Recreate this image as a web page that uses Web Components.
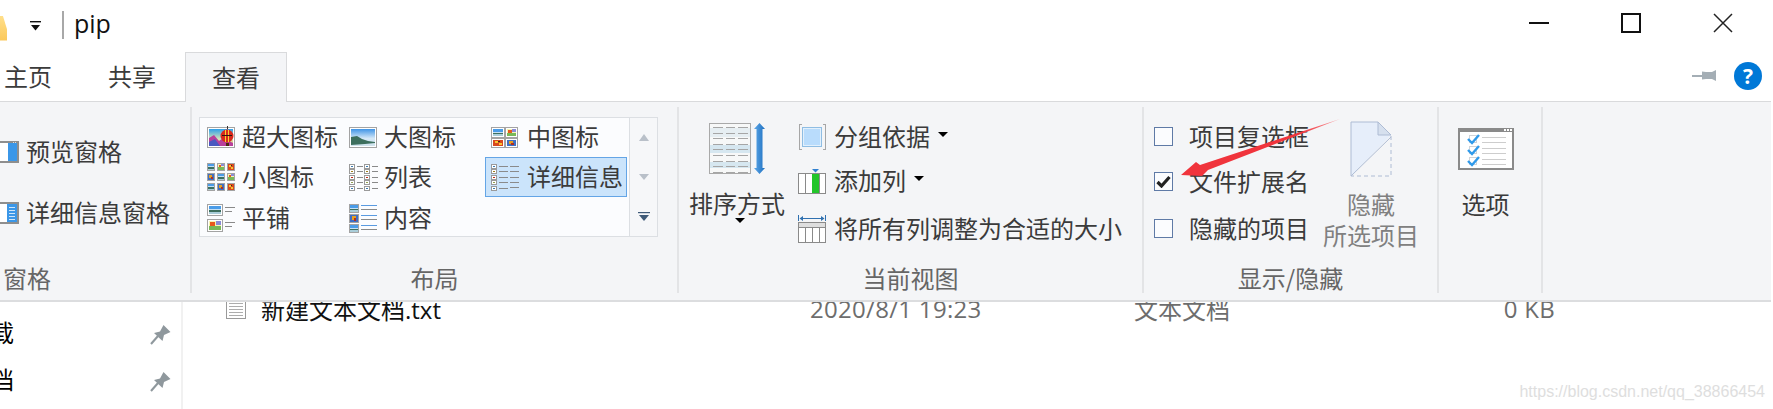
<!DOCTYPE html>
<html lang="zh-CN">
<head>
<meta charset="utf-8">
<title>pip</title>
<style>
  html, body { margin: 0; padding: 0; background: #fff; }
  body {
    position: relative; width: 1773px; height: 409px; overflow: hidden;
    font: 24px/30px "Noto Sans CJK SC", "Open Sans", sans-serif; color: #3b3b3b;
  }
</style>
</head>
<body>
<explorer-title title-text="pip"></explorer-title>
<ribbon-tabs></ribbon-tabs>
<ribbon-panel>
  <ribbon-group label="窗格" style="width:192px;--label-align:left;--label-pad:3px">
    <pane-buttons></pane-buttons>
  </ribbon-group>
  <ribbon-group label="布局" style="width:487px">
    <view-gallery>
      <gallery-item icon="xl">超大图标</gallery-item>
      <gallery-item icon="big">大图标</gallery-item>
      <gallery-item icon="medium" col3>中图标</gallery-item>
      <gallery-item icon="small">小图标</gallery-item>
      <gallery-item icon="list">列表</gallery-item>
      <gallery-item icon="details" col3 selected>详细信息</gallery-item>
      <gallery-item icon="tiles" low>平铺</gallery-item>
      <gallery-item icon="content" low>内容</gallery-item>
    </view-gallery>
  </ribbon-group>
  <ribbon-group label="当前视图" style="width:465px">
    <current-view></current-view>
  </ribbon-group>
  <ribbon-group label="显示/隐藏" style="width:295px">
    <show-hide></show-hide>
  </ribbon-group>
  <ribbon-group label="" style="width:104px">
    <big-button icon="options" top="21" text-top="18" style="margin-right:9px">选项</big-button>
  </ribbon-group>
</ribbon-panel>
<file-area></file-area>
<red-arrow></red-arrow>
<water-mark>https://blog.csdn.net/qq_38866454</water-mark>

<script>
(function() {
  const r = (x, y, w, h, f) => `<rect x="${x}" y="${y}" width="${w}" height="${h}" fill="${f}"/>`;
  const scenes = {
    lake: [[0,0,1,.42,'#4a9ce8'],[0,.38,1,.2,'#c5e0f5'],[0,.55,1,.25,'#3d6f5e'],[0,.78,1,.22,'#a9cdd9']],
    flower: [[0,0,1,1,'#f8f4b0'],[.55,0,.45,.4,'#8a8ad8'],[0,.55,1,.45,'#78b858'],[.1,.1,.4,.45,'#e8581c']],
    red: [[0,0,1,1,'#d8481e'],[.15,.15,.3,.3,'#f7c531'],[.55,.5,.3,.35,'#f7c531'],[.5,.15,.2,.2,'#3a2a1a']],
    night: [[0,0,1,1,'#3f6fc4'],[.2,.2,.5,.5,'#e8a020'],[.45,.45,.35,.4,'#b03020']]
  };
  // small framed picture, scene rects are given as fractions of the inside
  const pic = (x, y, w, h, s) => {
    const inset = w < 12 ? 1 : 2;
    let out = r(x, y, w, h, '#a3a3a3') + r(x + 1, y + 1, w - 2, h - 2, '#fff');
    const iw = w - inset * 2, ih = h - inset * 2;
    for (const p of scenes[s]) out += r(x + inset + p[0] * iw, y + inset + p[1] * ih, p[2] * iw, p[3] * ih, p[4]);
    return out;
  };
  const tiny = (x, y, c) => r(x, y, 6, 5, '#9a9a9a') + r(x + 1, y + 1, 4, 3, '#fff') + r(x + 2, y + 2, 2, 1, c);
  const tinyColors = ['#3a7ab0', '#a08020', '#c02a1a', '#90a050', '#3a7ab0'];
  const listCol = (x, lineW) => tinyColors.map((c, i) => tiny(x, 1 + Math.round(i * 5.4), c) + r(x + 8, 3 + Math.round(i * 5.4), lineW, 1, '#8a8a8a')).join('');

  const sortRows = () => {
    let out = r(0, 0, 42, 51, '#a9a9a9') + r(1, 1, 40, 49, '#f7f8f8');
    out += r(1, 5, 40, 9, '#e6eef2') + r(1, 22, 40, 8, '#d6e7f0') + r(1, 39, 40, 6, '#d6e7f0');
    for (let y = 4; y < 49; y += 5.6) {
      out += r(4, Math.round(y), 10, 1, '#a6a6a6') + r(17, Math.round(y), 9, 1, '#a6a6a6') + r(29, Math.round(y), 10, 1, '#a6a6a6');
    }
    return out;
  };

  const checkRow = (y) => r(11, y, 8, 8, '#cfd3d8') + r(12, y + 1, 6, 6, '#fff') +
    `<path d="M10 ${y + 4} l4 4 l7 -8" fill="none" stroke="#2f9aea" stroke-width="2.4" shape-rendering="auto"/>` +
    r(24, y + 2, 24, 1, '#cdcdcd') + r(24, y + 7, 24, 1, '#cdcdcd');

  const ICONS = {
    xl: [28, 28, `<defs><linearGradient id="s" x1="0" y1="0" x2="0" y2="1"><stop offset="0" stop-color="#2f9fe8"/><stop offset=".6" stop-color="#d8e6b8"/><stop offset="1" stop-color="#e8b060"/></linearGradient></defs>
      ${r(0,3,28,21,'#a3a3a3')}${r(1,4,26,19,'#fff')}<rect x="2" y="5" width="24" height="17" fill="url(#s)"/>
      <path d="M2 14 L7 11 L12 17 L16 14 L26 19 V22 H2Z" fill="#b8409c" shape-rendering="auto"/>
      <path d="M2 18 L8 15 L13 22 H2Z" fill="#4a58c0" shape-rendering="auto"/>
      <circle cx="20" cy="12" r="6.5" fill="#d8281c" shape-rendering="auto"/>${r(18,6,1,12,'#f7d030')}${r(21,6,1,12,'#f7d030')}${r(15,11,10,1,'#2a1a10')}${r(19,19,3,3,'#4a2a10')}${r(20,2,1,3,'#333')}`],
    big: [28, 28, `<defs><linearGradient id="k" x1="0" y1="0" x2="0" y2="1"><stop offset="0" stop-color="#3f94e6"/><stop offset=".55" stop-color="#d4e8f8"/><stop offset="1" stop-color="#cfe2ec"/></linearGradient></defs>
      ${r(0,3,28,21,'#a3a3a3')}${r(1,4,26,19,'#fff')}<rect x="2" y="5" width="24" height="17" fill="url(#k)"/>
      <path d="M2 13 L8 12 L13 15 L19 17 L26 18 V19 L16 20 L2 21Z" fill="#3d6f5e" shape-rendering="auto"/>`],
    medium: [28, 28, pic(0, 3, 14, 11, 'lake') + pic(14, 3, 13, 11, 'flower') + pic(0, 14, 14, 10, 'red') + pic(14, 14, 13, 10, 'night')],
    small: [28, 28, [['lake','flower','red'],['night','lake','flower'],['lake','night','red']].map((row, j) =>
      row.map((s, i) => pic(i * 10, j * 10, 8, 8, s)).join('')).join('')],
    list: [28, 28, listCol(0, 6) + listCol(15, 6)],
    details: [28, 28, listCol(0, 9) + [3, 8, 14, 19, 24].map(y => r(19, y, 9, 1, '#8a8a8a')).join('')],
    tiles: [28, 28, pic(0, 0, 16, 12, 'lake') + r(18, 3, 10, 1, '#8a8a8a') + r(18, 7, 7, 1, '#8a8a8a') +
      pic(0, 15, 16, 13, 'flower') + r(18, 18, 10, 1, '#8a8a8a') + r(18, 22, 7, 1, '#8a8a8a')],
    content: [28, 28, pic(0, 0, 10, 9, 'lake') + pic(0, 10, 10, 9, 'night') + pic(0, 20, 10, 9, 'lake') +
      [1, 11, 21].map(y => r(12, y, 16, 1, '#5a9ae0') + r(12, y + 4, 16, 1, '#8a8a8a')).join('')],
    sort: [56, 52, `<defs><linearGradient id="b" x1="0" y1="0" x2="1" y2="0"><stop offset="0" stop-color="#5fa8e8"/><stop offset="1" stop-color="#1c6fc0"/></linearGradient></defs>
      ${sortRows()}<path d="M50.5 0 L56 6 H53.5 V45 H56 L50.5 51 L45 45 H47.5 V6 H45Z" fill="url(#b)" shape-rendering="auto"/>`],
    group: [28, 26, `${r(1,0,1,26,'#a6a6a6')}${r(1,0,3,1,'#a6a6a6')}${r(1,25,3,1,'#a6a6a6')}${r(27,0,1,26,'#a6a6a6')}${r(25,0,3,1,'#a6a6a6')}${r(25,25,3,1,'#a6a6a6')}
      ${r(4,3,20,20,'#8fbde3')}${r(5,4,18,18,'#e2f0fc')}${r(6,5,16,16,'#b9dcfc')}`],
    addcol: [28, 26, `<path d="M14 1 H21 L17.5 4.5Z" fill="#2f80d0" shape-rendering="auto"/>${r(0,5,28,21,'#8a8a8a')}${r(1,6,26,19,'#fff')}${r(7,6,1,19,'#8a8a8a')}${r(14,6,7,19,'#22c52a')}${r(21,6,1,19,'#8a8a8a')}`],
    fit: [28, 28, `${r(0,0,1,6,'#2f70b0')}${r(27,0,1,6,'#2f70b0')}${r(2,3,24,1,'#2f70b0')}<path d="M1.5 3.5 L5 1 V6Z M26.5 3.5 L23 1 V6Z" fill="#2f70b0" shape-rendering="auto"/>
      ${r(0,7,28,21,'#8a8a8a')}${r(1,8,26,19,'#fff')}${r(1,8,26,4,'#dedede')}${r(1,12,26,1,'#8a8a8a')}${r(7,13,1,14,'#8a8a8a')}${r(14,13,1,14,'#8a8a8a')}${r(21,13,1,14,'#8a8a8a')}`],
    hide: [42, 56, `<g shape-rendering="auto"><path d="M1 1 H28 L41 14 L1 55Z" fill="#e6eefa"/><path d="M41 16 L1 55 V1 H28" fill="none" stroke="#aebcd4"/>
      <path d="M28 1 V14 H41Z" fill="#d6e0ee" stroke="#aebcd4"/><path d="M41 15 V55 H1" fill="none" stroke="#aebcd4" stroke-dasharray="4 3"/></g>`],
    options: [56, 42, `${r(0,0,56,42,'#8a8a8a')}${r(2,4,52,36,'#fff')}${r(46,1,2,2,'#fff')}${r(49,1,2,2,'#fff')}${r(52,1,2,2,'#fff')}${checkRow(7)}${checkRow(18)}${checkRow(29)}`],
    preview: [20, 22, `${r(0,0,19,22,'#8e8e8e')}${r(0,2,17,18,'#fff')}${r(8,2,9,18,'#3b97e8')}${r(13,1,1,1,'#ddd')}${r(15,1,1,1,'#ddd')}`],
    info: [20, 22, `${r(0,0,19,22,'#8e8e8e')}${r(0,2,17,18,'#fff')}${r(7,2,10,18,'#3b97e8')}${[5,8,11,14,17].map(y => r(9,y,6,1,'#cfe6fa')).join('')}`],
    file: [20, 17, `${r(0,0,1,17,'#9a9a9a')}${r(19,0,1,17,'#9a9a9a')}${r(0,16,20,1,'#9a9a9a')}${[1,4,7,10,13].map(y => r(3,y,14,1,'#adadad')).join('')}`],
    pin: [20, 20, `<path d="M0 20 L7 12" stroke="#8f989d" stroke-width="2" shape-rendering="auto"/><path d="M3 9 L9 7.5 L12.5 1 L19.5 8 L13 11 L11.5 17Z" fill="#8f989d" shape-rendering="auto"/>`],
    tackh: [24, 12, `<path d="M0 4.5 H11 V6.5 H0Z" fill="#a4aeb5"/><path d="M10 1.5 L14 2 H20 L24 0 V11 L20 9 H14 L10 9.5Z" fill="#a4aeb5" shape-rendering="auto"/>`]
  };

  class SvgIcon extends HTMLElement {
    static get observedAttributes() { return ['name']; }
    constructor() {
      super();
      this.attachShadow({ mode: 'open' });
    }
    attributeChangedCallback() {
      const def = ICONS[this.getAttribute('name')];
      this.shadowRoot.innerHTML = `<style>:host{display:block;flex:none;line-height:0}svg{display:block;overflow:visible}</style>
        <svg width="${def[0]}" height="${def[1]}" viewBox="0 0 ${def[0]} ${def[1]}" shape-rendering="crispEdges">${def[2]}</svg>`;
    }
  }
  customElements.define('svg-icon', SvgIcon);

  class ExplorerTitle extends HTMLElement {
    constructor() {
      super();
      this.attachShadow({ mode: 'open' }).innerHTML = `
      <style>
        :host { display: flex; align-items: center; height: 52px; }
        .folder { width: 7px; height: 25px; margin-top: 4px; background: linear-gradient(#ffdf8a, #fbc85a); clip-path: polygon(0 0, 40% 0, 100% 55%, 100% 100%, 0 100%); }
        .qa { margin: 0 0 0 23px; }
        .sep { width: 2px; height: 28px; background: #a8a8a8; margin: -2px 10px 0 21px; }
        .name { font: 25px/30px "Open Sans", sans-serif; color: #111; margin-top: -6px; }
        .controls { display: flex; margin-left: auto; margin-right: 4px; margin-top: -6px; }
        .controls div { width: 92px; display: flex; justify-content: center; align-items: center; }
      </style>
      <div class="folder"></div>
      <svg class="qa" width="11" height="10" viewBox="0 0 11 10"><rect width="11" height="1.4" fill="#111"/><path d="M1 4 H10 L5.5 9.5Z" fill="#111"/></svg>
      <div class="sep"></div>
      <div class="name"></div>
      <div class="controls">
        <div><svg width="20" height="20"><rect y="9" width="20" height="2" fill="#111"/></svg></div>
        <div><svg width="20" height="20"><rect x="1" y="1" width="18" height="18" fill="none" stroke="#111" stroke-width="2"/></svg></div>
        <div><svg width="20" height="20"><path d="M1 1 L19 19 M19 1 L1 19" stroke="#222" stroke-width="1.5"/></svg></div>
      </div>`;
    }
    connectedCallback() {
      this.shadowRoot.querySelector('.name').textContent = this.getAttribute('title-text');
    }
  }
  customElements.define('explorer-title', ExplorerTitle);

  class RibbonTabs extends HTMLElement {
    constructor() {
      super();
      this.attachShadow({ mode: 'open' }).innerHTML = `
      <style>
        :host { display: flex; align-items: flex-start; height: 49px; position: relative; z-index: 2; }
        .tab { box-sizing: border-box; width: 102px; height: 50px; margin-right: 2px; line-height: 48px; text-align: center; color: #3b3b3b; }
        .first { margin-left: -23px; }
        .on { background: #f4f5f7; border: 1px solid #d9dadc; border-bottom: 0; line-height: 48px; }
        .right { margin-left: auto; margin-right: 11px; display: flex; align-items: center; gap: 18px; height: 48px; }
        .help { width: 28px; height: 28px; border-radius: 50%; background: #0078d7; color: #fff; font: bold 21px/28px "Open Sans", sans-serif; text-align: center; }
      </style>
      <div class="tab first">主页</div><div class="tab">共享</div><div class="tab on">查看</div>
      <div class="right"><svg-icon name="tackh"></svg-icon><div class="help">?</div></div>`;
    }
  }
  customElements.define('ribbon-tabs', RibbonTabs);

  class RibbonPanel extends HTMLElement {
    constructor() {
      super();
      this.attachShadow({ mode: 'open' }).innerHTML = `
      <style>
        :host { display: flex; position: relative; z-index: 1; box-sizing: border-box; width: 1771px; height: 201px;
          padding: 5px 0 7px; background: #f4f5f7; border-top: 1px solid #d9dadc; border-bottom: 2px solid #dcdddf; }
      </style><slot></slot>`;
    }
  }
  customElements.define('ribbon-panel', RibbonPanel);

  class RibbonGroup extends HTMLElement {
    constructor() {
      super();
      this.attachShadow({ mode: 'open' }).innerHTML = `
      <style>
        :host { display: flex; flex-direction: column; flex: none; box-sizing: border-box; height: 186px; border-right: 2px solid #e3e4e6; }
        .body { flex: 1; min-height: 0; }
        .label { height: 30px; line-height: 30px; color: #666; text-align: var(--label-align, center); padding-left: var(--label-pad, 0); }
      </style>
      <div class="body"><slot></slot></div>
      <div class="label"></div>`;
    }
    connectedCallback() {
      this.shadowRoot.querySelector('.label').textContent = this.getAttribute('label');
    }
  }
  customElements.define('ribbon-group', RibbonGroup);

  class PaneButtons extends HTMLElement {
    constructor() {
      super();
      this.attachShadow({ mode: 'open' }).innerHTML = `
      <style>
        :host { display: flex; flex-direction: column; gap: 21px; padding-top: 25px; }
        .row { display: flex; align-items: center; height: 40px; gap: 6px; }
        .t { margin-top: -3px; }
      </style>
      <div class="row"><svg-icon name="preview"></svg-icon><span class="t">预览窗格</span></div>
      <div class="row"><svg-icon name="info"></svg-icon><span class="t">详细信息窗格</span></div>`;
    }
  }
  customElements.define('pane-buttons', PaneButtons);

  class ViewGallery extends HTMLElement {
    constructor() {
      super();
      this.attachShadow({ mode: 'open' }).innerHTML = `
      <style>
        :host { display: flex; box-sizing: border-box; width: 459px; height: 120px; margin: 10px 0 0 7px; border: 1px solid #dcdfe3; }
        .items { display: grid; grid-template-columns: 142px 143px 144px; grid-template-rows: 39px 40px 39px; width: 429px; background: #fbfcfe; }
        .scroll { flex: 1; border-left: 1px solid #dcdfe3; display: grid; grid-template-rows: 39px 40px 39px; background: #f6f7f9; }
        .scroll div { display: flex; align-items: center; justify-content: center; }
        .up { width: 0; height: 0; border: 5px solid transparent; border-top: 0; border-bottom: 7px solid #b9c0c9; }
        .down { width: 0; height: 0; border: 5px solid transparent; border-bottom: 0; border-top: 6px solid #b9c0c9; }
      </style>
      <div class="items"><slot></slot></div>
      <div class="scroll">
        <div><span class="up"></span></div>
        <div><span class="down"></span></div>
        <div><svg width="12" height="9"><rect width="12" height="1.2" fill="#3f5a78"/><path d="M1 3 H11 L6 9Z" fill="#3f5a78"/></svg></div>
      </div>`;
    }
  }
  customElements.define('view-gallery', ViewGallery);

  class GalleryItem extends HTMLElement {
    constructor() {
      super();
      this.attachShadow({ mode: 'open' }).innerHTML = `
      <style>
        :host { display: flex; align-items: center; gap: 7px; box-sizing: border-box; padding-left: 7px; min-width: 0; white-space: nowrap; color: #3b3b3b; }
        :host([col3]) { padding-left: 6px; gap: 8px; }
        :host([selected]) { background: #cbe4fb; border: 1px solid #64a5e6; margin-right: 2px; padding-left: 5px; }
        :host([low]) { padding-top: 3px; }
        .t { margin-top: -3px; }
      </style>
      <svg-icon></svg-icon><span class="t"><slot></slot></span>`;
    }
    connectedCallback() {
      this.shadowRoot.querySelector('svg-icon').setAttribute('name', this.getAttribute('icon'));
    }
  }
  customElements.define('gallery-item', GalleryItem);

  class BigButton extends HTMLElement {
    constructor() {
      super();
      this.attachShadow({ mode: 'open' }).innerHTML = `
      <style>
        :host { display: flex; flex-direction: column; align-items: center; line-height: 31px; color: #3b3b3b; }
        :host([disabled]) { color: #808080; }
        .text { text-align: center; }
      </style>
      <svg-icon></svg-icon><div class="text"><slot></slot></div>`;
    }
    connectedCallback() {
      this.shadowRoot.querySelector('svg-icon').setAttribute('name', this.getAttribute('icon'));
      this.style.paddingTop = (this.getAttribute('top') || 0) + 'px';
      this.shadowRoot.querySelector('.text').style.marginTop = (this.getAttribute('text-top') || 0) + 'px';
    }
  }
  customElements.define('big-button', BigButton);

  class CurrentView extends HTMLElement {
    constructor() {
      super();
      this.attachShadow({ mode: 'open' }).innerHTML = `
      <style>
        :host { display: flex; padding-left: 10px; gap: 13px; }
        .sort { width: 96px; display: flex; flex-direction: column; align-items: center; padding-top: 16px; }
        .sort .t { line-height: 30px; margin-top: 13px; white-space: nowrap; }
        .caret { width: 0; height: 0; border: 5px solid transparent; border-bottom: 0; border-top: 5px solid #000; }
        .sort .caret { margin-left: 6px; }
        .rows { display: grid; grid-template-rows: 44px 44px 52px; padding-top: 8px; }
        .row { display: flex; align-items: center; gap: 8px; white-space: nowrap; }
        .row .caret { margin: -5px 0 0 0; }
        .row .t { margin-top: -2px; }
      </style>
      <div class="sort"><svg-icon name="sort"></svg-icon><div class="t">排序方式</div><div class="caret"></div></div>
      <div class="rows">
        <div class="row"><svg-icon name="group"></svg-icon><span class="t">分组依据</span><span class="caret"></span></div>
        <div class="row"><svg-icon name="addcol"></svg-icon><span class="t">添加列</span><span class="caret"></span></div>
        <div class="row"><svg-icon name="fit"></svg-icon><span class="t">将所有列调整为合适的大小</span></div>
      </div>`;
    }
  }
  customElements.define('current-view', CurrentView);

  class CheckRow extends HTMLElement {
    constructor() {
      super();
      this.attachShadow({ mode: 'open' }).innerHTML = `
      <style>
        :host { display: flex; align-items: center; gap: 16px; white-space: nowrap; }
        .box { box-sizing: border-box; width: 19px; height: 19px; border: 1px solid #5f7aa6; background: #fbfcfe; display: flex; align-items: center; justify-content: center; }
        svg { display: none; }
        :host([checked]) svg { display: block; }
        .t { margin-top: -1px; }
      </style>
      <div class="box"><svg width="15" height="13" viewBox="0 0 15 13"><path d="M1.5 7 L5.5 11 L13.5 2" fill="none" stroke="#222" stroke-width="3.2"/></svg></div>
      <span class="t"><slot></slot></span>`;
    }
  }
  customElements.define('check-row', CheckRow);

  class ShowHide extends HTMLElement {
    constructor() {
      super();
      this.attachShadow({ mode: 'open' }).innerHTML = `
      <style>
        :host { display: flex; padding-left: 10px; gap: 14px; }
        .checks { width: 155px; display: grid; grid-template-rows: 44px 46px 48px; padding-top: 7px; }
      </style>
      <div class="checks">
        <check-row>项目复选框</check-row>
        <check-row checked>文件扩展名</check-row>
        <check-row>隐藏的项目</check-row>
      </div>
      <big-button icon="hide" top="14" text-top="11" disabled style="width:96px;white-space:nowrap">隐藏<br>所选项目</big-button>`;
    }
  }
  customElements.define('show-hide', ShowHide);

  class FileArea extends HTMLElement {
    constructor() {
      super();
      this.attachShadow({ mode: 'open' }).innerHTML = `
      <style>
        :host { display: flex; height: 107px; color: #000; }
        .nav { box-sizing: border-box; width: 183px; flex: none; border-right: 2px solid #f1f1f1; padding-top: 8px; }
        .nav div { display: flex; align-items: center; justify-content: space-between; height: 47px; padding-right: 10px; margin-left: -34px; }
        .nav span { margin-top: -3px; }
        .list { flex: 1; display: grid; grid-template-columns: 35px 549px 324px 270px 151px; grid-template-rows: 16px; padding-left: 43px; line-height: 16px; white-space: nowrap; align-items: center; }
        .name { color: #111; margin-top: -2px; }
        .dim { color: #6d6d6d; font-family: "Open Sans", "Noto Sans CJK SC", sans-serif; margin-top: -2px; letter-spacing: .3px; }
        .type { font-family: "Noto Sans CJK SC", sans-serif; letter-spacing: 0; }
        .size { text-align: right; }
      </style>
      <div class="nav">
        <div><span>下载</span><svg-icon name="pin"></svg-icon></div>
        <div><span>文档</span><svg-icon name="pin"></svg-icon></div>
      </div>
      <div class="list">
        <svg-icon name="file"></svg-icon>
        <span class="name">新建文本文档<span style="font-family:'Open Sans',sans-serif">.txt</span></span>
        <span class="dim">2020/8/1 19:23</span>
        <span class="dim type">文本文档</span>
        <span class="dim size">0 KB</span>
      </div>`;
    }
  }
  customElements.define('file-area', FileArea);

  // annotation drawn over the ribbon, the place is the content here
  class RedArrow extends HTMLElement {
    constructor() {
      super();
      this.attachShadow({ mode: 'open' }).innerHTML = `
      <style>:host { position: absolute; left: 1170px; top: 110px; z-index: 3; line-height: 0; }</style>
      <svg width="180" height="75" viewBox="0 0 180 75"><defs><linearGradient id="a" x1="0" y1="1" x2="1" y2="0"><stop offset=".75" stop-color="#f0343c"/><stop offset="1" stop-color="#f9a0a4"/></linearGradient></defs>
      <path d="M170 9 L38 60 L32 66 L11 65 L26 52 L30 55Z" fill="url(#a)"/></svg>`;
    }
  }
  customElements.define('red-arrow', RedArrow);

  class WaterMark extends HTMLElement {
    constructor() {
      super();
      this.attachShadow({ mode: 'open' }).innerHTML = `
      <style>:host { position: absolute; right: 8px; top: 381px; z-index: 3; font: 16px/22px "Liberation Sans", sans-serif; color: #dedede; white-space: nowrap; }</style><slot></slot>`;
    }
  }
  customElements.define('water-mark', WaterMark);
})();
</script>
</body>
</html>
